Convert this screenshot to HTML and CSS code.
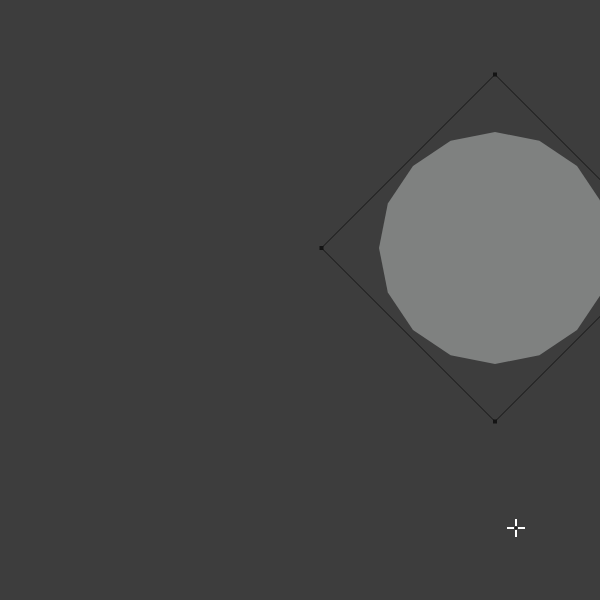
FILE: index.html
```html
<!DOCTYPE html>
<html>
<head>
<meta charset="utf-8">
<link rel="stylesheet" href="styles.css">
</head>
<body>
<svg class="viewport" width="600" height="600" viewBox="0 0 600 600" xmlns="http://www.w3.org/2000/svg">
  <polygon class="disc" points="495,132 539.39,140.83 577.02,165.98 602.17,203.61 611,248 602.17,292.39 577.02,330.02 539.39,355.17 495,364 450.61,355.17 412.98,330.02 387.83,292.39 379,248 387.83,203.61 412.98,165.98 450.61,140.83"/>
  <polygon class="cage" points="495,74.5 668.5,248 495,421.5 321.5,248"/>
  <rect class="vert" x="493" y="72.5" width="4" height="4"/>
  <rect class="vert" x="319.5" y="246" width="4" height="4"/>
  <rect class="vert" x="493" y="419.5" width="4" height="4"/>
  <g class="cursor">
    <rect x="507" y="527" width="7" height="2"/>
    <rect x="518" y="527" width="7" height="2"/>
    <rect x="515" y="519" width="2" height="7"/>
    <rect x="515" y="530" width="2" height="7"/>
  </g>
  <rect class="cursor-dot" x="515" y="527" width="2" height="2"/>
</svg>
</body>
</html>
```
FILE: styles.css
```css
html, body {
  margin: 0;
  padding: 0;
  background: #3d3d3d;
  width: 600px;
  height: 600px;
  overflow: hidden;
}
.viewport {
  display: block;
}
.disc {
  fill: #7f8180;
}
.cage {
  fill: none;
  stroke: #161616;
  stroke-width: 1;
}
.vert {
  fill: #141414;
}
.cursor rect {
  fill: #ffffff;
}
.cursor-dot {
  fill: #1e1e1e;
}
```
